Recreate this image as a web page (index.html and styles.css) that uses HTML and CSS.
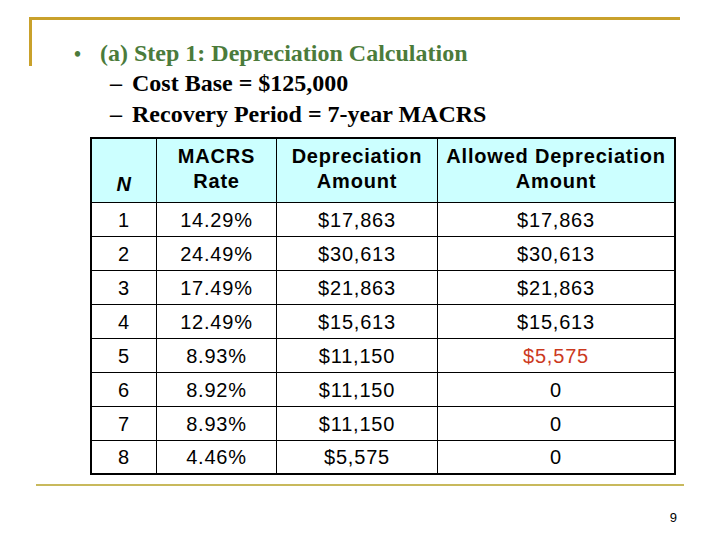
FILE: index.html
```html
<!DOCTYPE html>
<html>
<head>
<meta charset="utf-8">
<link rel="stylesheet" href="styles.css">
</head>
<body>
<div class="slide">
  <div class="frame">
    <h1 class="title"><span class="bullet">•</span><span>(a) Step 1: Depreciation Calculation</span></h1>
  </div>
  <ul class="sublist">
    <li><span class="dash">–</span><span>Cost Base = $125,000</span></li>
    <li><span class="dash">–</span><span>Recovery Period = 7-year MACRS</span></li>
  </ul>
  <div class="table">
    <div class="cell head n-cell"><i>N</i></div>
    <div class="cell head">MACRS<br>Rate</div>
    <div class="cell head">Depreciation<br>Amount</div>
    <div class="cell head last thin-top">Allowed Depreciation<br>Amount</div>

    <div class="cell">1</div><div class="cell">14.29%</div><div class="cell">$17,863</div><div class="cell last">$17,863</div>
    <div class="cell">2</div><div class="cell">24.49%</div><div class="cell">$30,613</div><div class="cell last">$30,613</div>
    <div class="cell">3</div><div class="cell">17.49%</div><div class="cell">$21,863</div><div class="cell last">$21,863</div>
    <div class="cell">4</div><div class="cell">12.49%</div><div class="cell">$15,613</div><div class="cell last">$15,613</div>
    <div class="cell">5</div><div class="cell">8.93%</div><div class="cell">$11,150</div><div class="cell last red">$5,575</div>
    <div class="cell">6</div><div class="cell">8.92%</div><div class="cell">$11,150</div><div class="cell last">0</div>
    <div class="cell">7</div><div class="cell">8.93%</div><div class="cell">$11,150</div><div class="cell last">0</div>
    <div class="cell bottom">8</div><div class="cell bottom">4.46%</div><div class="cell bottom">$5,575</div><div class="cell last bottom">0</div>
  </div>
  <div class="rule"></div>
  <div class="page-num">9</div>
</div>
</body>
</html>
```

FILE: styles.css
```css
html, body {
  margin: 0;
  padding: 0;
  background: #ffffff;
}

.slide {
  width: 720px;
  height: 540px;
  overflow: hidden;
  font-family: "Liberation Serif", "Times New Roman", serif;
}

.frame {
  margin: 17px 0 0 29px;
  width: 648px;
  height: 46px;
  border-top: 3px solid #c9a12b;
  border-left: 3px solid #c9a12b;
}

.title {
  margin: 0;
  padding: 18px 0 0 42px;
  display: flex;
  align-items: baseline;
  font-size: 24px;
  line-height: 30px;
  font-weight: bold;
  color: #4b7b3b;
}

.bullet {
  width: 26px;
  font-size: 20px;
}

.sublist {
  list-style: none;
  margin: 2px 0 0 0;
  padding: 0 0 0 110px;
  font-size: 24px;
  line-height: 31px;
  font-weight: bold;
  color: #000000;
}

.sublist li {
  display: flex;
}

.dash {
  width: 22px;
}

.table {
  margin: 7px 0 0 90px;
  width: 586px;
  box-sizing: border-box;
  border: 2px solid #000000;
  display: grid;
  grid-template-columns: 65px 120px 161px 236px;
  grid-template-rows: 64px repeat(7, 34px) 32px;
  font-family: "Liberation Sans", Arial, sans-serif;
  font-size: 20px;
  letter-spacing: 0.8px;
  color: #000000;
}

.cell {
  box-sizing: border-box;
  border-right: 1px solid #000000;
  border-bottom: 1px solid #000000;
  display: flex;
  align-items: center;
  justify-content: center;
  text-align: center;
  padding-top: 1px;
}

.cell.last {
  border-right: none;
}

.cell.bottom {
  border-bottom: none;
}

.head {
  background: #ccffff;
  font-weight: bold;
  line-height: 25px;
  padding: 0 0 4px 0;
}

.n-cell {
  align-items: flex-end;
  padding-bottom: 5px;
}

.red {
  color: #cc3a1e;
}

.rule {
  margin: 9px 0 0 36px;
  width: 648px;
  height: 2px;
  background: #c8b95c;
}

.page-num {
  width: 677px;
  margin-top: 24px;
  text-align: right;
  font-family: "Liberation Sans", Arial, sans-serif;
  font-size: 13px;
  line-height: 15px;
  color: #000000;
}
```
